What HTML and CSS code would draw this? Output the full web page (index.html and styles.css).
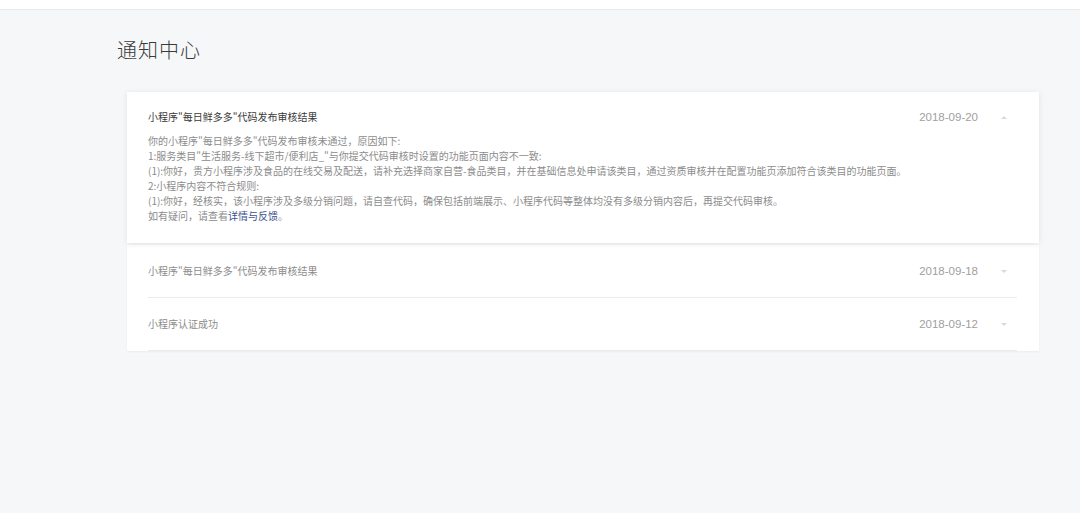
FILE: index.html
```html
<!DOCTYPE html>
<html lang="zh-CN">
<head>
<meta charset="utf-8">
<title>通知中心</title>
<link rel="stylesheet" href="styles.css">
</head>
<body>
<header class="topbar"></header>
<main class="page">
  <h1 class="page-title">通知中心</h1>
  <section class="notices">
    <article class="notice notice-open">
      <div class="notice-head">
        <span class="notice-title">小程序"每日鲜多多"代码发布审核结果</span>
        <span class="notice-date">2018-09-20</span>
        <span class="notice-caret caret-up"></span>
      </div>
      <div class="notice-body">
        <p>你的小程序"每日鲜多多"代码发布审核未通过，原因如下:</p>
        <p>1:服务类目"生活服务-线下超市/便利店_"与你提交代码审核时设置的功能页面内容不一致:</p>
        <p>(1):你好，贵方小程序涉及食品的在线交易及配送，请补充选择商家自营-食品类目，并在基础信息处申请该类目，通过资质审核并在配置功能页添加符合该类目的功能页面。</p>
        <p>2:小程序内容不符合规则:</p>
        <p>(1):你好，经核实，该小程序涉及多级分销问题，请自查代码，确保包括前端展示、小程序代码等整体均没有多级分销内容后，再提交代码审核。</p>
        <p>如有疑问，请查看<a class="notice-link">详情与反馈</a>。</p>
      </div>
    </article>
    <div class="notice-list">
      <article class="notice notice-closed">
        <div class="notice-head">
          <span class="notice-title">小程序"每日鲜多多"代码发布审核结果</span>
          <span class="notice-date">2018-09-18</span>
          <span class="notice-caret caret-down"></span>
        </div>
      </article>
      <article class="notice notice-closed">
        <div class="notice-head">
          <span class="notice-title">小程序认证成功</span>
          <span class="notice-date">2018-09-12</span>
          <span class="notice-caret caret-down"></span>
        </div>
      </article>
    </div>
  </section>
</main>
</body>
</html>
```

FILE: styles.css
```css
* { box-sizing: border-box; }
html, body { margin: 0; padding: 0; }
body {
  background: #f6f7f9;
  font-family: "Noto Sans CJK SC", "Noto Sans", "Liberation Sans", sans-serif;
  color: #333;
  height: 513px;
  overflow: hidden;
}
.topbar {
  height: 10px;
  background: #fff;
  border-bottom: 1px solid #e8e9ec;
}
.page {
  padding: 26px 41px 0 117px;
}
.page-title {
  margin: 0;
  font-size: 20px;
  font-weight: 300;
  line-height: 28px;
  color: #3a3a3a;
  letter-spacing: 1px;
}
.notices {
  margin-top: 28px;
  margin-left: 10px;
  width: 912px;
}
.notice-open {
  background: #fff;
  box-shadow: 0 1px 6px rgba(0,0,0,0.09);
  padding: 17px 32px 20px 21px;
  position: relative;
  z-index: 1;
}
.notice-head {
  display: flex;
  align-items: center;
}
.notice-title {
  flex: 1;
  font-size: 10px;
  line-height: 16px;
}
.notice-open .notice-title { color: #3a3a3a; }
.notice-date {
  font-family: "Liberation Sans", Arial, sans-serif;
  font-size: 11.5px;
  color: #a0a0a0;
  line-height: 16px;
}
.notice-caret {
  width: 0;
  height: 0;
  margin-left: 23px;
  border-left: 3px solid transparent;
  border-right: 3px solid transparent;
}
.caret-up { border-bottom: 3px solid #d9d9d9; }
.caret-down { border-top: 3px solid #d9d9d9; }
.notice-body {
  margin-top: 8px;
  font-size: 10px;
  line-height: 15px;
  color: #8c8c8c;
}
.notice-body p { margin: 0; white-space: nowrap; }
.notice-link { color: #3c4f8e; }
.notice-list {
  margin-top: 2px;
  background: #fff;
  padding: 0 22px 0 21px;
  box-shadow: 0 1px 2px rgba(0,0,0,0.05);
}
.notice-closed {
  height: 53px;
  display: flex;
  flex-direction: column;
  justify-content: center;
  border-bottom: 1px solid #ececec;
}
.notice-closed .notice-head { padding-right: 10px; }
.notice-closed .notice-title { color: #8c8c8c; }
```
